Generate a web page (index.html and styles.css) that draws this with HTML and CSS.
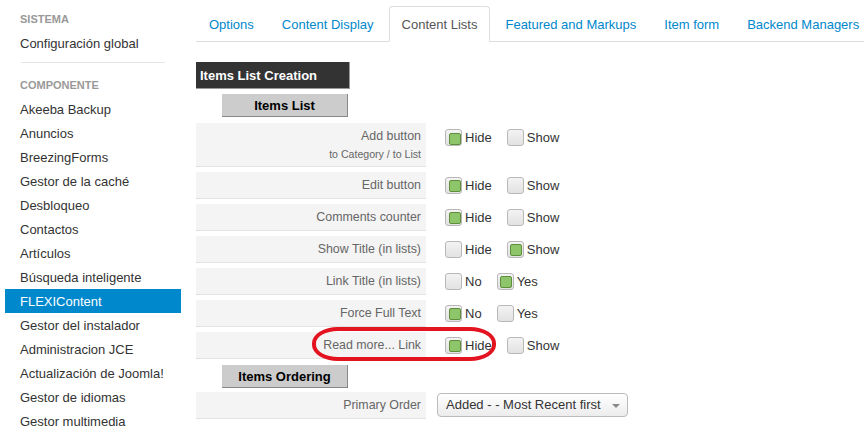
FILE: index.html
```html
<!DOCTYPE html>
<html>
<head>
<meta charset="utf-8">
<link rel="stylesheet" href="styles.css">
</head>
<body>
<div class="page">
  <aside class="sidebar">
    <div class="nav-header">Sistema</div>
    <div class="nav-item">Configuración global</div>
    <div class="divider"></div>
    <div class="nav-header">Componente</div>
    <div class="nav-item">Akeeba Backup</div>
    <div class="nav-item">Anuncios</div>
    <div class="nav-item">BreezingForms</div>
    <div class="nav-item">Gestor de la caché</div>
    <div class="nav-item">Desbloqueo</div>
    <div class="nav-item">Contactos</div>
    <div class="nav-item">Artículos</div>
    <div class="nav-item">Búsqueda inteligente</div>
    <div class="nav-item active">FLEXIContent</div>
    <div class="nav-item">Gestor del instalador</div>
    <div class="nav-item">Administracion JCE</div>
    <div class="nav-item">Actualización de Joomla!</div>
    <div class="nav-item">Gestor de idiomas</div>
    <div class="nav-item">Gestor multimedia</div>
  </aside>
  <main class="main">
    <ul class="tabs">
      <li class="tab">Options</li>
      <li class="tab">Content Display</li>
      <li class="tab active">Content Lists</li>
      <li class="tab">Featured and Markups</li>
      <li class="tab">Item form</li>
      <li class="tab">Backend Managers</li>
    </ul>
    <div class="section-title">Items List Creation</div>
    <div class="sub-title">Items List</div>
    <div class="rows">
      <div class="row row-tall">
        <div class="label"><div>Add button</div><div class="small">to Category / to List</div></div>
        <div class="value">
          <span class="opt"><span class="cb checked"></span>Hide</span>
          <span class="opt"><span class="cb"></span>Show</span>
        </div>
      </div>
      <div class="row">
        <div class="label">Edit button</div>
        <div class="value">
          <span class="opt"><span class="cb checked"></span>Hide</span>
          <span class="opt"><span class="cb"></span>Show</span>
        </div>
      </div>
      <div class="row">
        <div class="label">Comments counter</div>
        <div class="value">
          <span class="opt"><span class="cb checked"></span>Hide</span>
          <span class="opt"><span class="cb"></span>Show</span>
        </div>
      </div>
      <div class="row">
        <div class="label">Show Title (in lists)</div>
        <div class="value">
          <span class="opt"><span class="cb"></span>Hide</span>
          <span class="opt"><span class="cb checked"></span>Show</span>
        </div>
      </div>
      <div class="row">
        <div class="label">Link Title (in lists)</div>
        <div class="value">
          <span class="opt"><span class="cb"></span>No</span>
          <span class="opt"><span class="cb checked"></span>Yes</span>
        </div>
      </div>
      <div class="row">
        <div class="label">Force Full Text</div>
        <div class="value">
          <span class="opt"><span class="cb checked"></span>No</span>
          <span class="opt"><span class="cb"></span>Yes</span>
        </div>
      </div>
      <div class="row marked">
        <div class="label">Read more... Link</div>
        <div class="value">
          <span class="opt"><span class="cb checked"></span>Hide</span>
          <span class="opt"><span class="cb"></span>Show</span>
        </div>
        <div class="highlight-ring"></div>
      </div>
      <div class="sub-title">Items Ordering</div>
      <div class="row">
        <div class="label">Primary Order</div>
        <div class="value select-cell">
          <div class="select">Added - - Most Recent first<span class="caret"></span></div>
        </div>
      </div>
    </div>
  </main>
</div>
</body>
</html>
```

FILE: styles.css
```css
* { box-sizing: border-box; }
html, body { margin: 0; padding: 0; background: #fff; }
body {
  font-family: "Liberation Sans", Arial, sans-serif;
  font-size: 13px;
  color: #333;
  width: 864px;
  height: 426px;
  overflow: hidden;
}
.page { display: flex; align-items: flex-start; }

.sidebar { width: 181px; flex: none; padding: 7px 0 0 5px; }
.nav-header {
  height: 24px; line-height: 24px; padding-left: 15px;
  font-size: 11px; font-weight: bold; color: #999; text-transform: uppercase;
}
.nav-item { height: 24px; line-height: 25px; padding-left: 15px; color: #333; white-space: nowrap; }
.nav-item.active { background: #0088cc; color: #fff; }
.divider { height: 1px; background: #e5e5e5; margin: 7px 16px 10px 16px; }

.main { flex: 1; padding: 6px 0 0 15px; min-width: 0; }
.tabs {
  list-style: none; margin: 0; padding: 0; display: flex;
  border-bottom: 1px solid #ddd; white-space: nowrap; width: 700px;
}
.tab {
  padding: 9px 12px 7px; line-height: 18px; margin-right: 2px; margin-bottom: -1px;
  color: #0088cc; border: 1px solid transparent; border-radius: 4px 4px 0 0;
}
.tab.active { color: #555; background: #fff; border-color: #ddd #ddd transparent #ddd; }

.section-title {
  margin-top: 20px; width: 154px; height: 27px; line-height: 28px;
  background: #333; color: #fff; font-weight: bold; font-size: 13px;
  padding-left: 4px; border-right: 1px solid #999; border-bottom: 1px solid #999;
}
.sub-title {
  margin: 5px 0 0 26px; width: 126px; height: 23px; line-height: 24px;
  background: #ccc; color: #000; font-weight: bold; font-size: 13px; text-align: center;
  border-right: 1px solid #888; border-bottom: 1px solid #888;
}
.rows { display: flex; flex-direction: column; gap: 5px; margin-top: 6px; }
.rows .sub-title { margin: 1px 0 -1px 26px; }
.row { display: flex; height: 27px; position: relative; }
.row-tall { height: 44px; }
.label {
  width: 230px; flex: none; background: #f4f4f4; border-bottom: 1px solid #e2e2e2;
  text-align: right; padding-right: 5px; color: #666; line-height: 26px; font-size: 12.4px;
}
.row-tall .label { padding-top: 4px; line-height: 18px; }
.label .small { font-size: 10.6px; line-height: 18px; }
.value { display: flex; align-items: center; padding-left: 19px; height: 26px; }
.row-tall .value { height: 28px; padding-top: 1px; }
.opt { display: inline-flex; align-items: center; margin-right: 15px; color: #333; }
.cb {
  width: 17px; height: 17px; margin-right: 3px; border: 1px solid #b8b8b8; border-radius: 3px;
  background: linear-gradient(#f3f3f3, #e2e2e2); position: relative; flex: none;
}
.cb.checked::after {
  content: ""; position: absolute; left: 2.5px; top: 2.5px; width: 10px; height: 10px;
  border: 1px solid #5e8f3c; border-radius: 2px; background: #8fc56a;
}
.select-cell { padding-left: 11px; }
.select {
  width: 191px; height: 24px; line-height: 22px; border: 1px solid #bbb; border-radius: 4px;
  background: linear-gradient(#fff, #ececec); padding-left: 8px; color: #333; font-size: 13px;
  position: relative;
}
.caret {
  position: absolute; right: 7px; top: 10px; width: 0; height: 0;
  border-left: 4px solid transparent; border-right: 4px solid transparent; border-top: 4px solid #888;
}
.highlight-ring {
  position: absolute; left: 116px; top: -5px; width: 184px; height: 34px;
  border: 4px solid #e3141f; border-radius: 26px / 16px; pointer-events: none;
}
```
